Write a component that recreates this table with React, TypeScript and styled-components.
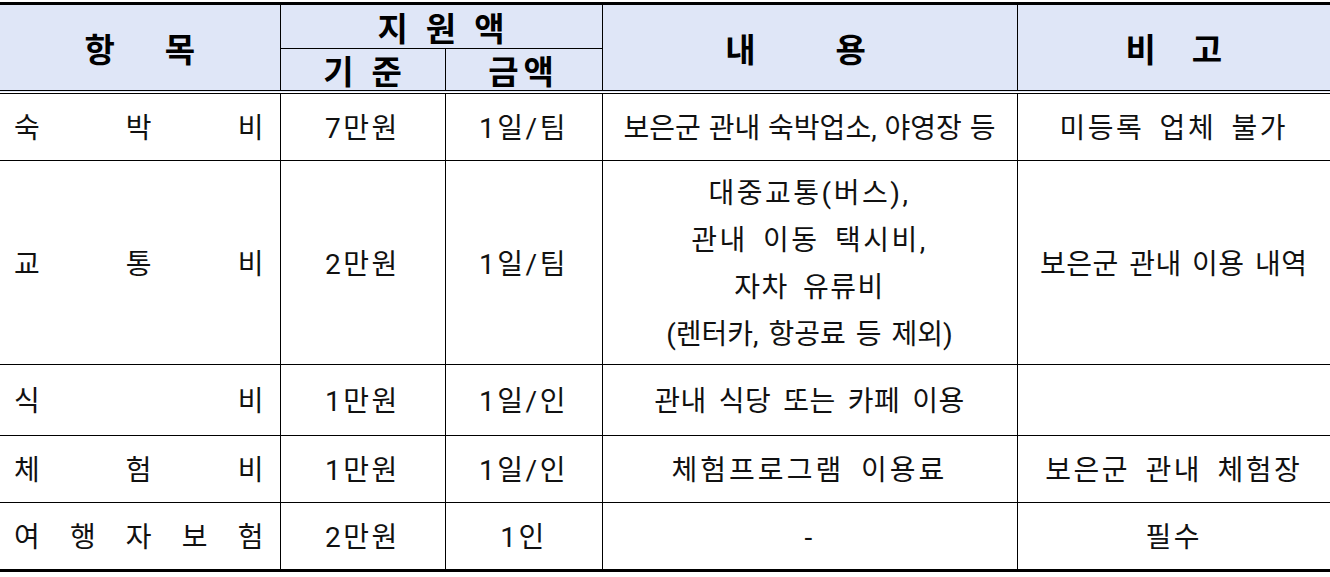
import React from "react";
import styled, { createGlobalStyle } from "styled-components";

const Global = createGlobalStyle`
  html, body { margin: 0; padding: 0; background: #ffffff; }
  body { font-family: "Noto Sans CJK KR", "Noto Sans", sans-serif; color: #000; }
`;

const Page = styled.div`
  width: 1330px;
  padding-top: 2px;
`;

const Table = styled.table`
  width: 1330px;
  table-layout: fixed;
  border-collapse: collapse;
  border-top: 3px solid #000;
  border-bottom: 3px solid #000;
`;

const HeadCell = styled.th<{ $h?: number; $pr?: number }>`
  background: #dfe6f7;
  border: 1px solid #000;
  border-top: none;
  height: ${(p) => p.$h ?? 42}px;
  padding: 0 ${(p) => p.$pr ?? 0}px 0 0;
  font-weight: 700;
  font-size: 33px;
  line-height: 34px;
  text-align: center;
  vertical-align: middle;
  color: #000;
  &:first-child { border-left: none; }
  &:last-child { border-right: none; }
`;

const HeadWords = styled.div<{ $gap: number; $ls?: number }>`
  display: flex;
  justify-content: center;
  gap: ${(p) => p.$gap}px;
  letter-spacing: ${(p) => p.$ls ?? 0}px;
`;

const HeadRowLast = styled.tr`
  th { border-bottom: 4px double #000; }
`;

const HeadRowFirst = styled.tr`
  th[rowspan] { border-bottom: 4px double #000; }
`;

const Row = styled.tr<{ $h: number }>`
  height: ${(p) => p.$h}px;
`;

const Cell = styled.td<{ $ls?: number; $ws?: number }>`
  border: 1px solid #000;
  padding: 4px 2px 0;
  font-family: Roboto, "Noto Sans CJK KR", sans-serif;
  font-size: 28px;
  line-height: 47px;
  letter-spacing: ${(p) => p.$ls ?? 2.5}px;
  word-spacing: ${(p) => p.$ws ?? 6}px;
  text-align: center;
  vertical-align: middle;
  color: #111;
  white-space: nowrap;
  &:first-child { border-left: none; }
  &:last-child { border-right: none; }
`;

const Spread = styled.div`
  display: flex;
  justify-content: space-between;
  padding: 0 14px 0 12px;
  letter-spacing: 0;
`;

const Line = styled.div<{ $ls?: number; $ws?: number }>`
  ${(p) => (p.$ls !== undefined ? `letter-spacing: ${p.$ls}px;` : "")}
  ${(p) => (p.$ws !== undefined ? `word-spacing: ${p.$ws}px;` : "")}
`;

type Text = { t: string; ls?: number; ws?: number };

type RowData = {
  item: string[];
  base: string;
  amount: string;
  content: Text[];
  note: Text;
  h: number;
};

const rows: RowData[] = [
  {
    item: ["숙", "박", "비"],
    base: "7만원",
    amount: "1일/팀",
    content: [{ t: "보은군 관내 숙박업소, 야영장 등", ls: 0, ws: 1 }],
    note: { t: "미등록 업체 불가" },
    h: 68,
  },
  {
    item: ["교", "통", "비"],
    base: "2만원",
    amount: "1일/팀",
    content: [
      { t: "대중교통(버스)," },
      { t: "관내 이동 택시비," },
      { t: "자차 유류비", ls: 1.5 },
      { t: "(렌터카, 항공료 등 제외)", ls: 0, ws: 3 },
    ],
    note: { t: "보은군 관내 이용 내역", ls: 0.5, ws: 3 },
    h: 204,
  },
  {
    item: ["식", "비"],
    base: "1만원",
    amount: "1일/인",
    content: [{ t: "관내 식당 또는 카페 이용", ls: 0.5, ws: 4.5 }],
    note: { t: "" },
    h: 71,
  },
  {
    item: ["체", "험", "비"],
    base: "1만원",
    amount: "1일/인",
    content: [{ t: "체험프로그램 이용료", ls: 3, ws: 7 }],
    note: { t: "보은군 관내 체험장" },
    h: 67,
  },
  {
    item: ["여", "행", "자", "보", "험"],
    base: "2만원",
    amount: "1인",
    content: [{ t: "-" }],
    note: { t: "필수" },
    h: 68,
  },
];

export default function App() {
  return (
    <Page>
      <Global />
      <Table>
        <colgroup>
          <col style={{ width: 280 }} />
          <col style={{ width: 165 }} />
          <col style={{ width: 157 }} />
          <col style={{ width: 415 }} />
          <col style={{ width: 313 }} />
        </colgroup>
        <thead>
          <HeadRowFirst>
            <HeadCell rowSpan={2}>
              <HeadWords $gap={50}><span>항</span><span>목</span></HeadWords>
            </HeadCell>
            <HeadCell colSpan={2} $h={43}>
              <HeadWords $gap={18}><span>지</span><span>원</span><span>액</span></HeadWords>
            </HeadCell>
            <HeadCell rowSpan={2} $pr={28}>
              <HeadWords $gap={80}><span>내</span><span>용</span></HeadWords>
            </HeadCell>
            <HeadCell rowSpan={2}>
              <HeadWords $gap={36}><span>비</span><span>고</span></HeadWords>
            </HeadCell>
          </HeadRowFirst>
          <HeadRowLast>
            <HeadCell $h={41}>
              <HeadWords $gap={18}><span>기</span><span>준</span></HeadWords>
            </HeadCell>
            <HeadCell $h={41}>
              <HeadWords $gap={0} $ls={5}><span>금액</span></HeadWords>
            </HeadCell>
          </HeadRowLast>
        </thead>
        <tbody>
          {rows.map((r, i) => (
            <Row key={i} $h={r.h}>
              <Cell>
                <Spread>
                  {r.item.map((c, j) => (
                    <span key={j}>{c}</span>
                  ))}
                </Spread>
              </Cell>
              <Cell>{r.base}</Cell>
              <Cell>{r.amount}</Cell>
              <Cell>
                {r.content.map((l, j) => (
                  <Line key={j} $ls={l.ls} $ws={l.ws}>{l.t}</Line>
                ))}
              </Cell>
              <Cell $ls={r.note.ls} $ws={r.note.ws}>{r.note.t}</Cell>
            </Row>
          ))}
        </tbody>
      </Table>
    </Page>
  );
}
